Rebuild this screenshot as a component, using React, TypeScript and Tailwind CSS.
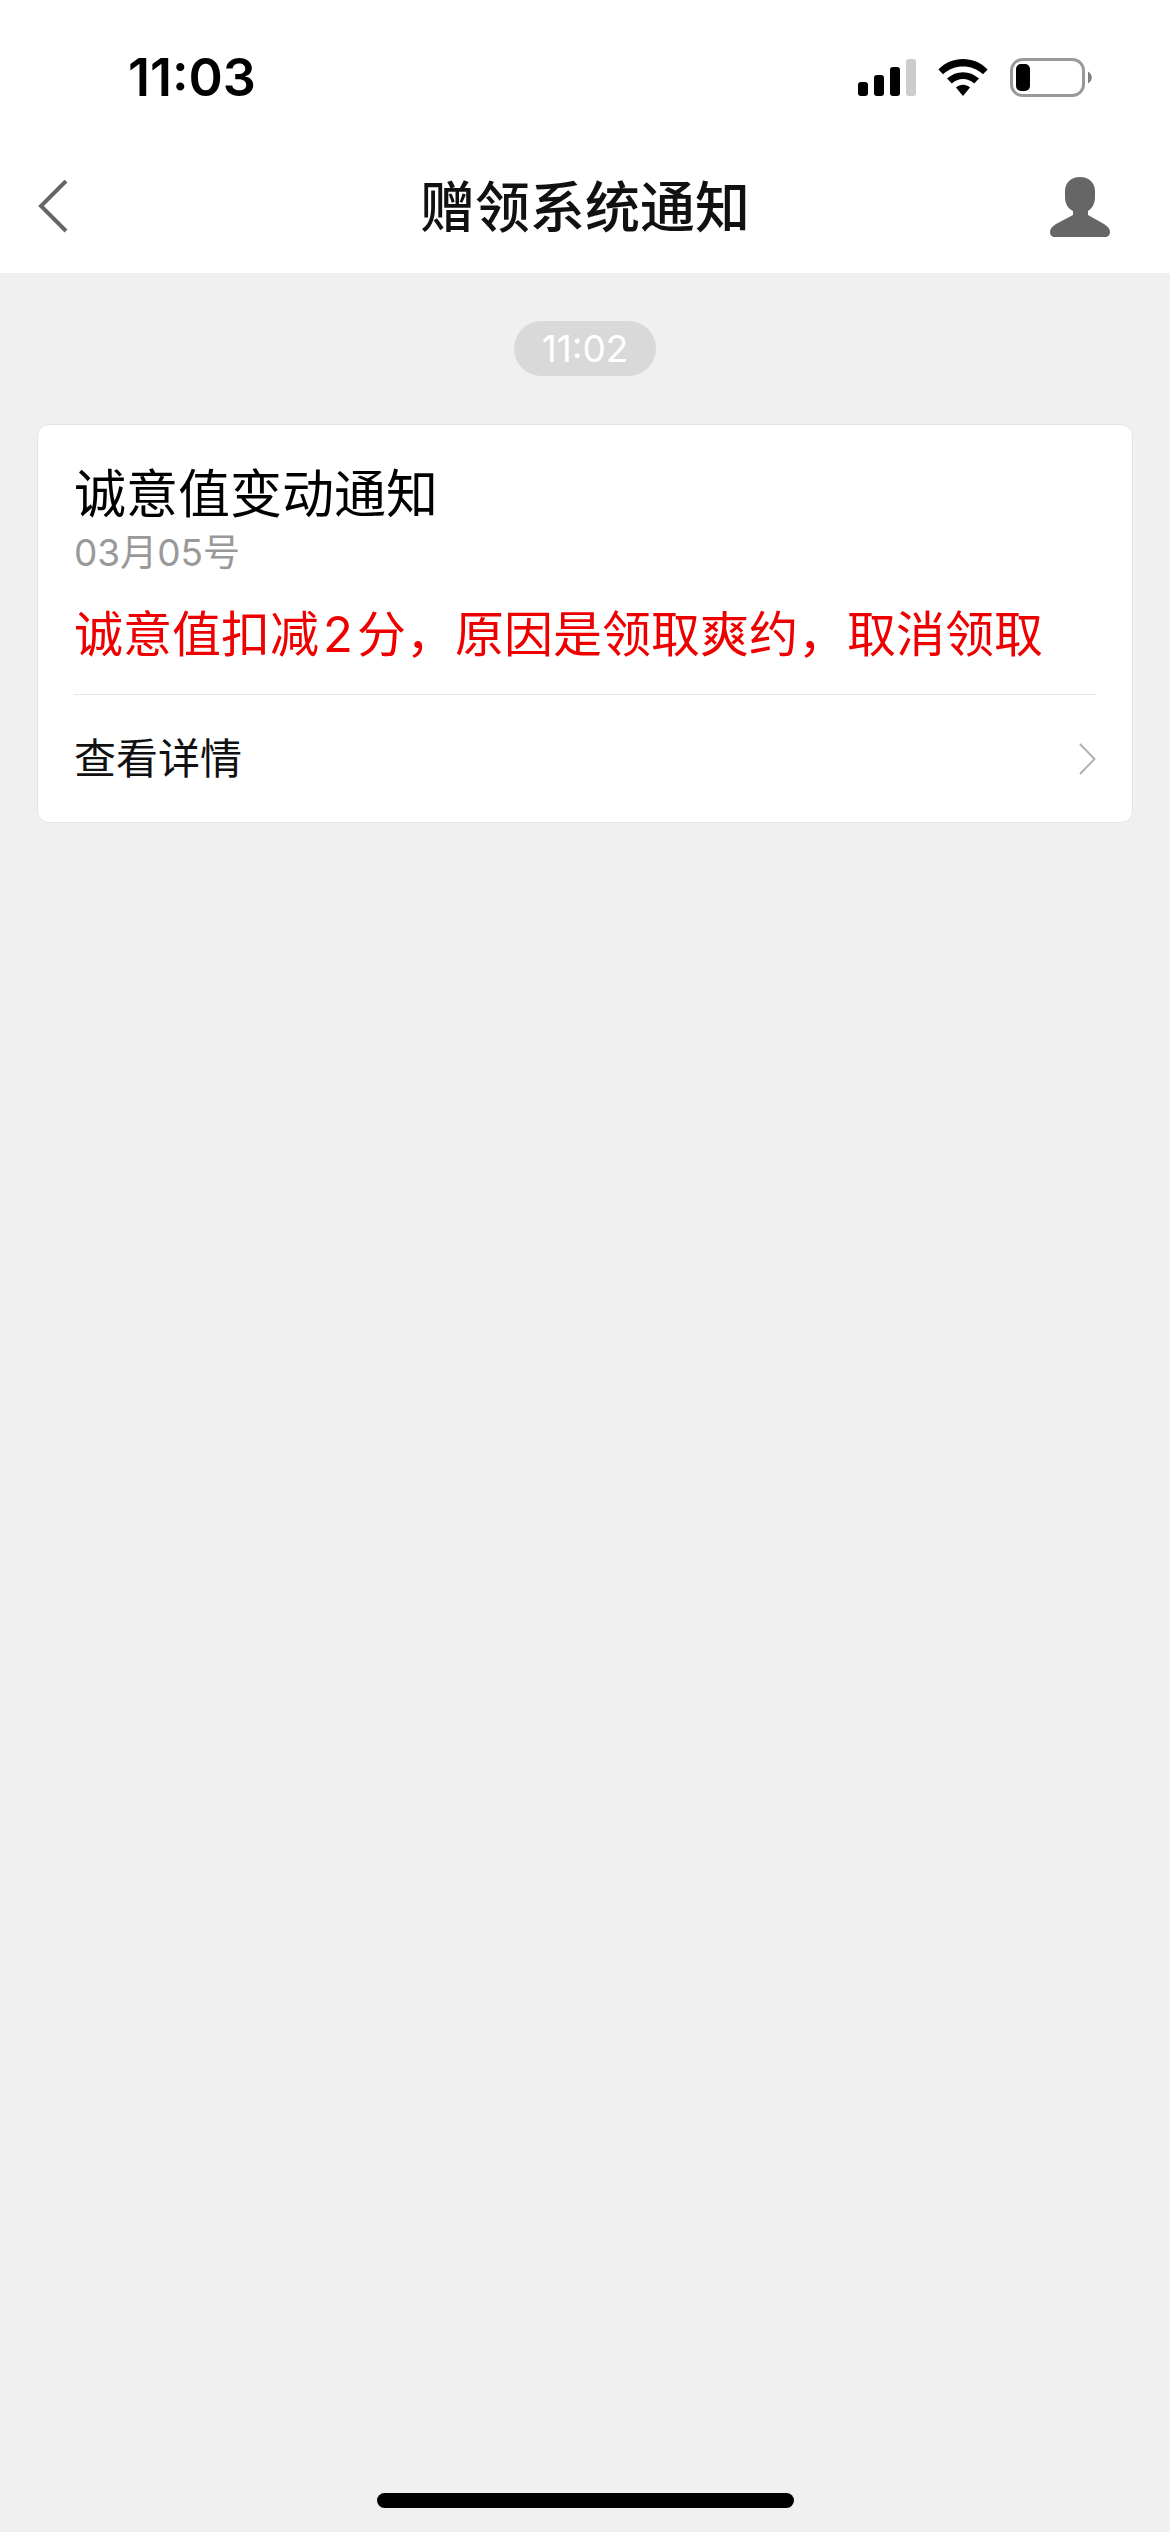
import React from 'react';

interface Notice {
  time: string;
  title: string;
  date: string;
  before: string;
  points: number;
  after: string;
  action: string;
}

const notices: Notice[] = [
  {
    time: '11:02',
    title: '诚意值变动通知',
    date: '03月05号',
    before: '诚意值扣减',
    points: 2,
    after: '分，原因是领取爽约，取消领取',
    action: '查看详情',
  },
];

const SignalIcon = () => (
  <svg className="h-10 w-[58px]" viewBox="0 0 58 40" aria-hidden="true">
    <rect x="0" y="24" width="10" height="14" rx="3" />
    <rect x="16" y="17" width="10" height="21" rx="3" />
    <rect x="32" y="9" width="10" height="29" rx="3" />
    <rect x="48" y="1" width="10" height="37" rx="3" fill="#cccccc" />
  </svg>
);

const WifiIcon = () => (
  <svg className="h-10 w-[50px]" viewBox="0 0 50 40" aria-hidden="true">
    <path d="M0.4 11.4C14 -2.4 36 -2.4 49.6 11.4L45 16.2C34 5.8 16 5.8 5 16.2Z" />
    <path d="M9 20.6C18 12 32 12 41 20.6L36.2 25.6C30 19.6 20 19.6 13.8 25.6Z" />
    <path d="M18 29.4C22 26 28 26 32 29.4L25 38Z" />
  </svg>
);

const BatteryIcon = () => (
  <svg className="h-10 w-[82px]" viewBox="0 0 82 40" aria-hidden="true">
    <rect x="1.5" y="1.5" width="72" height="36" rx="11" fill="none" stroke="#999999" strokeWidth="3" />
    <rect x="6" y="6" width="14" height="27" rx="5" />
    <path d="M78 13.5C83 16 83 23 78 25.5Z" fill="#808080" />
  </svg>
);

const StatusBar = () => (
  <div className="flex h-[141px] items-center justify-between bg-white pt-[14px] pr-[78px] pl-32">
    <span className="text-[52px] leading-[60px] font-semibold">11:03</span>
    <div className="flex items-center gap-[22px]">
      <SignalIcon />
      <WifiIcon />
      <BatteryIcon />
    </div>
  </div>
);

const NavBar = ({ title }: { title: string }) => (
  <header className="grid h-[132px] grid-cols-[1fr_auto_1fr] items-center bg-white px-9">
    <button type="button" aria-label="返回" className="justify-self-start">
      <svg className="h-[54px] w-8" viewBox="0 0 32 54" fill="none" stroke="#666666" strokeWidth="4">
        <path d="M30 1L5 26L30 51" />
      </svg>
    </button>
    <h1 className="text-[55px] leading-[72px] font-medium text-[#111111]">{title}</h1>
    <button type="button" aria-label="个人资料" className="justify-self-end pr-6">
      <svg className="size-[60px]" viewBox="0 0 60 60" fill="#666666">
        <path d="M30 0C39 0 45 6 45 14V20C45 27 42 31.5 38 34V38L54 47C58 49.5 60 52 60 55C60 58 58 60 55 60H5C2 60 0 58 0 55C0 52 2 49.5 6 47L23 38V34C18 31.5 15 27 15 20V14C15 6 21 0 30 0Z" />
      </svg>
    </button>
  </header>
);

const NoticeCard = ({ notice }: { notice: Notice }) => (
  <article className="mt-12 w-full rounded-xl border border-[#e5e5e5] bg-white px-9 pt-10">
    <h2 className="text-[52px] leading-[60px]">{notice.title}</h2>
    <p className="mt-1 text-[37px] leading-[48px] text-[#999999]">{notice.date}</p>
    <p className="mt-7 pb-[29px] text-[49px] leading-[60px] text-[#ee0000]">
      {notice.before}
      <span className="mx-1">{notice.points}</span>
      {notice.after}
    </p>
    <a
      href="#detail"
      className="flex h-32 items-center justify-between border-t border-[#e5e5e5] text-[42px] text-[#111111]"
    >
      {notice.action}
      <svg className="h-8 w-[17px]" viewBox="0 0 17 32" fill="none" stroke="#b2b2b2" strokeWidth="2">
        <path d="M1 1L15.5 16L1 31" />
      </svg>
    </a>
  </article>
);

export default function App() {
  return (
    <div className="flex min-h-screen flex-col bg-[#f0f0f0] font-[Inter,'Noto_Sans_CJK_SC',sans-serif] text-black">
      <StatusBar />
      <NavBar title="赠领系统通知" />

      <main className="flex flex-1 flex-col items-center px-[37px] pt-12">
        {notices.map((notice) => (
          <React.Fragment key={notice.time}>
            <time className="rounded-full bg-[#d9d9d9] px-7 text-[37px] leading-[55px] text-white">
              {notice.time}
            </time>
            <NoticeCard notice={notice} />
          </React.Fragment>
        ))}
      </main>

      <div className="mx-auto mb-6 h-[15px] w-[417px] rounded-full bg-black" />
    </div>
  );
}
